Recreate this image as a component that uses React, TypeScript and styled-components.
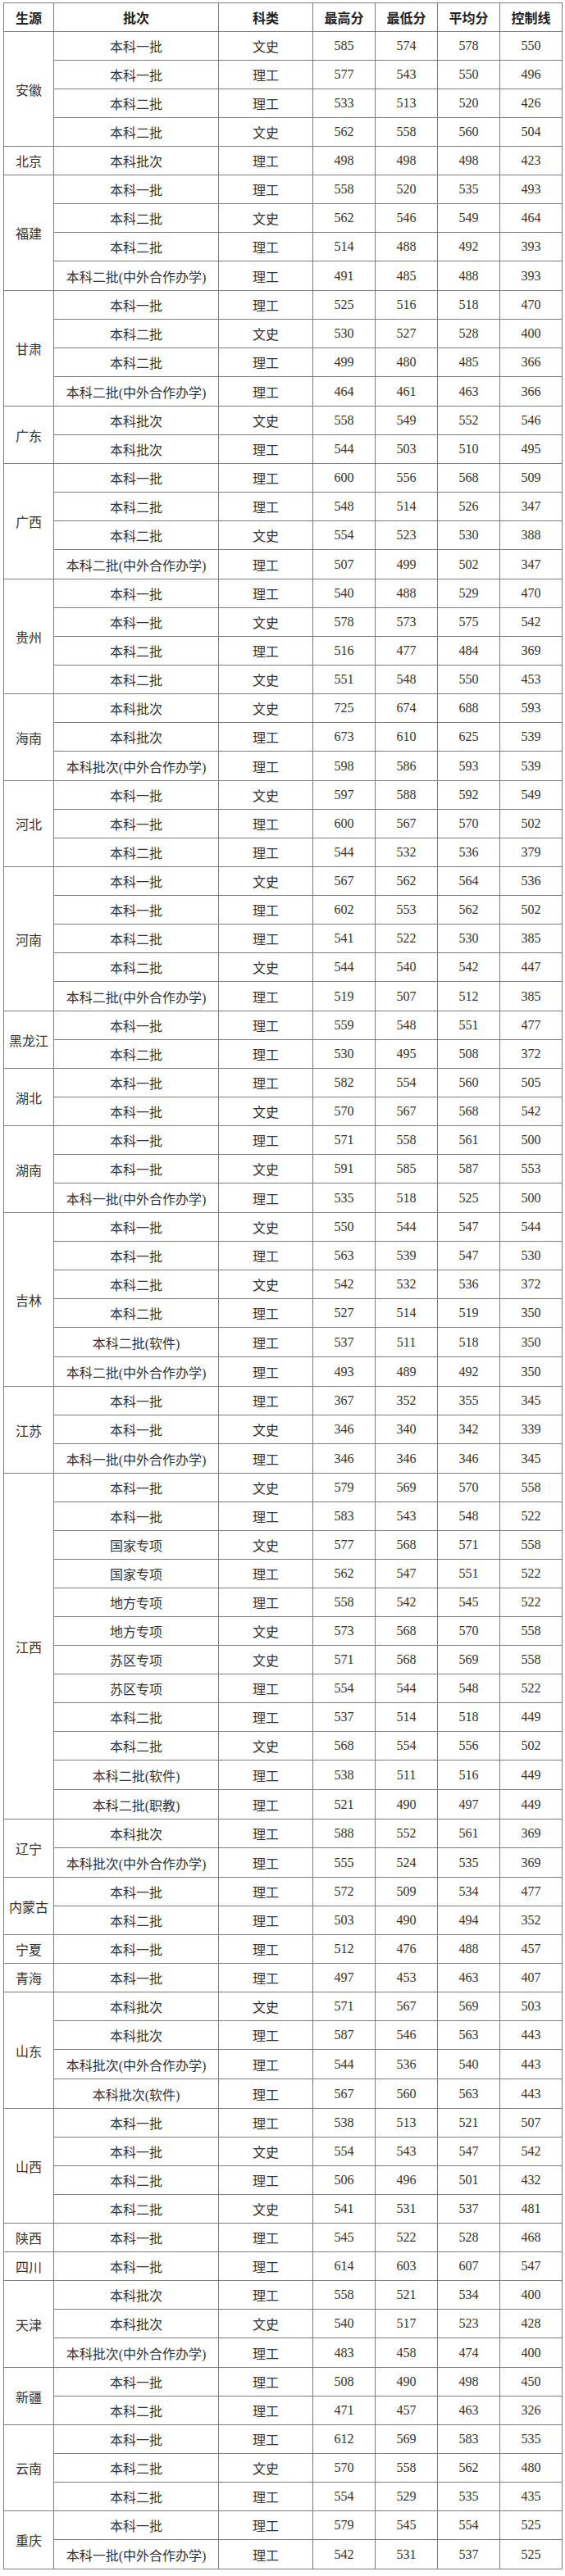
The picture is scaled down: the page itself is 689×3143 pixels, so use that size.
import { createGlobalStyle, styled } from "styled-components";

type Row = [string, string, number, number, number, number];
type Group = { province: string; rows: Row[] };

const groups: Group[] = [
  { province: "安徽", rows: [
    ["本科一批", "文史", 585, 574, 578, 550],
    ["本科一批", "理工", 577, 543, 550, 496],
    ["本科二批", "理工", 533, 513, 520, 426],
    ["本科二批", "文史", 562, 558, 560, 504],
  ] },
  { province: "北京", rows: [
    ["本科批次", "理工", 498, 498, 498, 423],
  ] },
  { province: "福建", rows: [
    ["本科一批", "理工", 558, 520, 535, 493],
    ["本科二批", "文史", 562, 546, 549, 464],
    ["本科二批", "理工", 514, 488, 492, 393],
    ["本科二批(中外合作办学)", "理工", 491, 485, 488, 393],
  ] },
  { province: "甘肃", rows: [
    ["本科一批", "理工", 525, 516, 518, 470],
    ["本科二批", "文史", 530, 527, 528, 400],
    ["本科二批", "理工", 499, 480, 485, 366],
    ["本科二批(中外合作办学)", "理工", 464, 461, 463, 366],
  ] },
  { province: "广东", rows: [
    ["本科批次", "文史", 558, 549, 552, 546],
    ["本科批次", "理工", 544, 503, 510, 495],
  ] },
  { province: "广西", rows: [
    ["本科一批", "理工", 600, 556, 568, 509],
    ["本科二批", "理工", 548, 514, 526, 347],
    ["本科二批", "文史", 554, 523, 530, 388],
    ["本科二批(中外合作办学)", "理工", 507, 499, 502, 347],
  ] },
  { province: "贵州", rows: [
    ["本科一批", "理工", 540, 488, 529, 470],
    ["本科一批", "文史", 578, 573, 575, 542],
    ["本科二批", "理工", 516, 477, 484, 369],
    ["本科二批", "文史", 551, 548, 550, 453],
  ] },
  { province: "海南", rows: [
    ["本科批次", "文史", 725, 674, 688, 593],
    ["本科批次", "理工", 673, 610, 625, 539],
    ["本科批次(中外合作办学)", "理工", 598, 586, 593, 539],
  ] },
  { province: "河北", rows: [
    ["本科一批", "文史", 597, 588, 592, 549],
    ["本科一批", "理工", 600, 567, 570, 502],
    ["本科二批", "理工", 544, 532, 536, 379],
  ] },
  { province: "河南", rows: [
    ["本科一批", "文史", 567, 562, 564, 536],
    ["本科一批", "理工", 602, 553, 562, 502],
    ["本科二批", "理工", 541, 522, 530, 385],
    ["本科二批", "文史", 544, 540, 542, 447],
    ["本科二批(中外合作办学)", "理工", 519, 507, 512, 385],
  ] },
  { province: "黑龙江", rows: [
    ["本科一批", "理工", 559, 548, 551, 477],
    ["本科二批", "理工", 530, 495, 508, 372],
  ] },
  { province: "湖北", rows: [
    ["本科一批", "理工", 582, 554, 560, 505],
    ["本科一批", "文史", 570, 567, 568, 542],
  ] },
  { province: "湖南", rows: [
    ["本科一批", "理工", 571, 558, 561, 500],
    ["本科一批", "文史", 591, 585, 587, 553],
    ["本科一批(中外合作办学)", "理工", 535, 518, 525, 500],
  ] },
  { province: "吉林", rows: [
    ["本科一批", "文史", 550, 544, 547, 544],
    ["本科一批", "理工", 563, 539, 547, 530],
    ["本科二批", "文史", 542, 532, 536, 372],
    ["本科二批", "理工", 527, 514, 519, 350],
    ["本科二批(软件)", "理工", 537, 511, 518, 350],
    ["本科二批(中外合作办学)", "理工", 493, 489, 492, 350],
  ] },
  { province: "江苏", rows: [
    ["本科一批", "理工", 367, 352, 355, 345],
    ["本科一批", "文史", 346, 340, 342, 339],
    ["本科一批(中外合作办学)", "理工", 346, 346, 346, 345],
  ] },
  { province: "江西", rows: [
    ["本科一批", "文史", 579, 569, 570, 558],
    ["本科一批", "理工", 583, 543, 548, 522],
    ["国家专项", "文史", 577, 568, 571, 558],
    ["国家专项", "理工", 562, 547, 551, 522],
    ["地方专项", "理工", 558, 542, 545, 522],
    ["地方专项", "文史", 573, 568, 570, 558],
    ["苏区专项", "文史", 571, 568, 569, 558],
    ["苏区专项", "理工", 554, 544, 548, 522],
    ["本科二批", "理工", 537, 514, 518, 449],
    ["本科二批", "文史", 568, 554, 556, 502],
    ["本科二批(软件)", "理工", 538, 511, 516, 449],
    ["本科二批(职教)", "理工", 521, 490, 497, 449],
  ] },
  { province: "辽宁", rows: [
    ["本科批次", "理工", 588, 552, 561, 369],
    ["本科批次(中外合作办学)", "理工", 555, 524, 535, 369],
  ] },
  { province: "内蒙古", rows: [
    ["本科一批", "理工", 572, 509, 534, 477],
    ["本科二批", "理工", 503, 490, 494, 352],
  ] },
  { province: "宁夏", rows: [
    ["本科一批", "理工", 512, 476, 488, 457],
  ] },
  { province: "青海", rows: [
    ["本科一批", "理工", 497, 453, 463, 407],
  ] },
  { province: "山东", rows: [
    ["本科批次", "文史", 571, 567, 569, 503],
    ["本科批次", "理工", 587, 546, 563, 443],
    ["本科批次(中外合作办学)", "理工", 544, 536, 540, 443],
    ["本科批次(软件)", "理工", 567, 560, 563, 443],
  ] },
  { province: "山西", rows: [
    ["本科一批", "理工", 538, 513, 521, 507],
    ["本科一批", "文史", 554, 543, 547, 542],
    ["本科二批", "理工", 506, 496, 501, 432],
    ["本科二批", "文史", 541, 531, 537, 481],
  ] },
  { province: "陕西", rows: [
    ["本科一批", "理工", 545, 522, 528, 468],
  ] },
  { province: "四川", rows: [
    ["本科一批", "理工", 614, 603, 607, 547],
  ] },
  { province: "天津", rows: [
    ["本科批次", "理工", 558, 521, 534, 400],
    ["本科批次", "文史", 540, 517, 523, 428],
    ["本科批次(中外合作办学)", "理工", 483, 458, 474, 400],
  ] },
  { province: "新疆", rows: [
    ["本科一批", "理工", 508, 490, 498, 450],
    ["本科二批", "理工", 471, 457, 463, 326],
  ] },
  { province: "云南", rows: [
    ["本科一批", "理工", 612, 569, 583, 535],
    ["本科二批", "文史", 570, 558, 562, 480],
    ["本科二批", "理工", 554, 529, 535, 435],
  ] },
  { province: "重庆", rows: [
    ["本科一批", "理工", 579, 545, 554, 525],
    ["本科一批(中外合作办学)", "理工", 542, 531, 537, 525],
  ] },
];

const headers = ["生源", "批次", "科类", "最高分", "最低分", "平均分", "控制线"];
const widths = [61, 201, 115, 76, 76, 76, 76];

const GlobalStyle = createGlobalStyle`
  body {
    margin: 0;
    background: #fff;
  }
`;

const Wrapper = styled.div`
  padding: 3px 0 0 4px;
`;

const Table = styled.table`
  border-collapse: collapse;
  table-layout: fixed;
  width: 681px;
  font-family: "Liberation Serif", "Noto Sans CJK SC", serif;
  font-size: 16px;
  color: #333;
`;

const Col = styled.col<{ $w: number }>`
  width: ${(p) => p.$w}px;
`;

const HeadCell = styled.th`
  height: 34px;
  padding: 0;
  border: 1px solid #7c7c7c;
  font-weight: bold;
  text-align: center;
  vertical-align: middle;
  color: #222;
`;

const Cell = styled.td<{ $tall?: boolean }>`
  height: ${(p) => (p.$tall ? 35 : 34)}px;
  padding: 0;
  border: 1px solid #7c7c7c;
  text-align: center;
  vertical-align: middle;
  white-space: nowrap;
`;

const ProvinceCell = styled.td`
  padding: 0;
  border: 1px solid #7c7c7c;
  text-align: center;
  vertical-align: middle;
  white-space: nowrap;
`;

export default function App() {
  return (
    <>
      <GlobalStyle />
      <Wrapper>
        <Table>
          <colgroup>
            {widths.map((w, i) => (
              <Col key={i} $w={w} />
            ))}
          </colgroup>
          <thead>
            <tr>
              {headers.map((h) => (
                <HeadCell key={h}>{h}</HeadCell>
              ))}
            </tr>
          </thead>
          <tbody>
            {groups.map((g) =>
              g.rows.map((r, i) => {
                const tall = r[0].includes("(");
                return (
                  <tr key={g.province + i}>
                    {i === 0 ? (
                      <ProvinceCell rowSpan={g.rows.length}>{g.province}</ProvinceCell>
                    ) : null}
                    {r.map((v, j) => (
                      <Cell key={j} $tall={tall}>
                        {v}
                      </Cell>
                    ))}
                  </tr>
                );
              })
            )}
          </tbody>
        </Table>
      </Wrapper>
    </>
  );
}
